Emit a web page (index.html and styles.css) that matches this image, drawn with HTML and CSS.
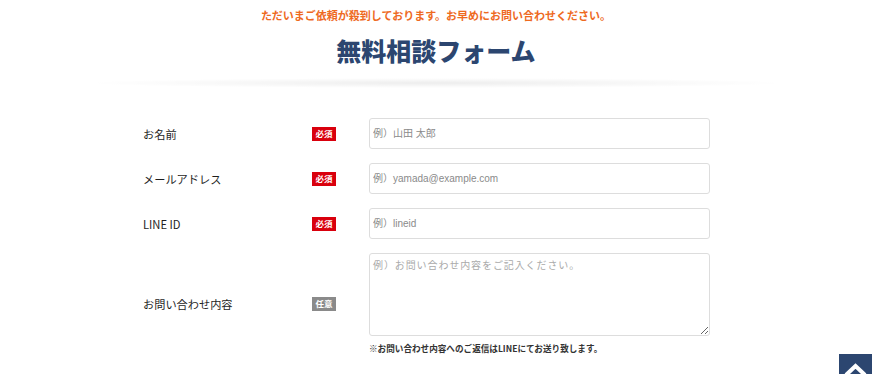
FILE: index.html
```html
<!DOCTYPE html>
<html lang="ja">
<head>
<meta charset="utf-8">
<title>無料相談フォーム</title>
<link rel="stylesheet" href="styles.css">
</head>
<body>
<header class="head">
  <p class="notice">ただいまご依頼が殺到しております。お早めにお問い合わせください。</p>
  <h1 class="title">無料相談フォーム</h1>
  <div class="head-shadow"></div>
</header>
<form class="form">
  <div class="row">
    <label class="label">お名前</label>
    <span class="badge req">必須</span>
    <div class="field"><input class="input" type="text" placeholder="例）山田 太郎"></div>
  </div>
  <div class="row">
    <label class="label">メールアドレス</label>
    <span class="badge req">必須</span>
    <div class="field"><input class="input" type="text" placeholder="例）yamada@example.com"></div>
  </div>
  <div class="row">
    <label class="label">LINE ID</label>
    <span class="badge req">必須</span>
    <div class="field"><input class="input" type="text" placeholder="例）lineid"></div>
  </div>
  <div class="row">
    <label class="label">お問い合わせ内容</label>
    <span class="badge opt">任意</span>
    <div class="field">
      <textarea class="textarea" placeholder="例）お問い合わせ内容をご記入ください。"></textarea>
      <p class="note">※お問い合わせ内容へのご返信はLINEにてお送り致します。</p>
    </div>
  </div>
</form>
<a class="totop" href="#" aria-label="ページトップへ">
  <svg width="33" height="24" viewBox="0 0 33 24"><path d="M7 21 L16.5 12 L26 21" fill="none" stroke="#fff" stroke-width="4"/></svg>
</a>
</body>
</html>
```

FILE: styles.css
```css
* { box-sizing: border-box; }
html, body { margin: 0; padding: 0; background: #fff; }
body {
  font-family: "Noto Sans CJK JP", "Noto Sans", sans-serif;
  color: #333;
  height: 374px;
  overflow: hidden;
}
.head {
  text-align: center;
  padding-top: 8px;
}
.notice {
  margin: 0;
  font-size: 11px;
  line-height: 15px;
  font-weight: 700;
  color: #ee6a1f;
}
.title {
  margin: 9px 0 0;
  font-size: 25px;
  line-height: 36px;
  font-weight: 900;
  color: #2c4670;
  letter-spacing: 0;
}
.head-shadow {
  width: 700px;
  height: 10px;
  margin: 10px auto 0;
  background: radial-gradient(ellipse 50% 50% at 50% 50%, rgba(0,0,0,0.07), rgba(0,0,0,0) 100%);
}
.form {
  width: 586px;
  margin: 30px auto 0;
  padding-right: 19px;
  display: flex;
  flex-direction: column;
  gap: 14px;
}
.row {
  display: grid;
  grid-template-columns: 169px 24px 341px;
  column-gap: 0;
  align-items: center;
}
.row .field { margin-left: 33px; }
.label {
  font-size: 11.2px;
  font-weight: 400;
  color: #1e1e1e;
}
.badge {
  display: flex;
  align-items: center;
  justify-content: center;
  width: 24px;
  height: 14px;
  font-size: 8.5px;
  font-weight: 700;
  color: #fff;
  line-height: 1;
}
.req { background: #d9000d; }
.opt { background: #8a8a8a; }
.field { width: 341px; }
.input, .textarea {
  display: block;
  width: 341px;
  border: 1px solid #ddd;
  border-radius: 3px;
  background: #fff;
  outline: none;
}
.input {
  height: 31px;
  padding: 0 3px;
  font-family: "Liberation Sans", "Noto Sans CJK JP", sans-serif;
  font-size: 10px;
}
.textarea {
  height: 83px;
  padding: 3px 3px;
  font-family: "Noto Sans CJK JP", sans-serif;
  font-size: 10px;
  letter-spacing: 0.9px;
  resize: vertical;
}
.input::placeholder { color: #8a8a8a; }
.textarea::placeholder { color: #aaa; }
.note {
  margin: 6px 0 0;
  font-size: 8.6px;
  line-height: 12px;
  font-weight: 700;
  color: #333;
}
.totop {
  position: fixed;
  right: 0;
  top: 354px;
  width: 33px;
  height: 40px;
  background: #2c4670;
  display: block;
}
.totop svg { display: block; }
```
